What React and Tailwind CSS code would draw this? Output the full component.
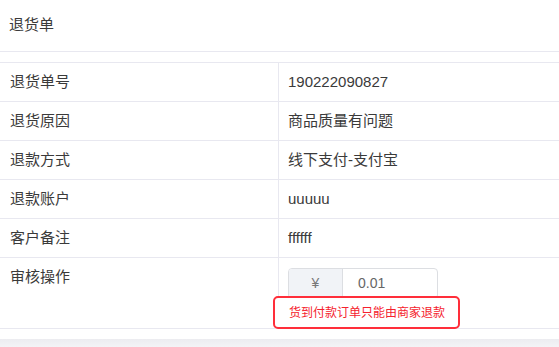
const ROWS = [
  { label: '退货单号', value: '190222090827' },
  { label: '退货原因', value: '商品质量有问题' },
  { label: '退款方式', value: '线下支付-支付宝' },
  { label: '退款账户', value: 'uuuuu' },
  { label: '客户备注', value: 'ffffff' },
];

const font = { fontFamily: '"Liberation Sans", "Noto Sans CJK SC", sans-serif' };

export default function App() {
  return (
    <div className="w-[559px] h-[347px] bg-white overflow-hidden text-[15px] text-[#3a3a3a]" style={font}>
      {/* Titel */}
      <div className="h-[52px] flex items-center pl-[9px] border-b border-[#e8e8f0]">退货单</div>

      <div className="mt-[10px] border-t border-[#e8e8f0]">
        {ROWS.map(r => (
          <div key={r.label} className="flex h-[39px] border-b border-[#e8e8f0]">
            <div className="w-[279px] shrink-0 border-r border-[#e8e8f0] flex items-center pl-[10px]">{r.label}</div>
            <div className="flex-1 flex items-center pl-[9px]">{r.value}</div>
          </div>
        ))}

        {/* Aktion */}
        <div className="flex h-[71px] border-b border-[#e8e8f0]">
          <div className="w-[279px] shrink-0 border-r border-[#e8e8f0] pl-[10px] pt-[8px] leading-[22px]">审核操作</div>
          <div className="flex-1 pl-[9px] pt-[10px] relative">
            <div className="flex w-[150px] h-[31px] border border-[#dcdee2] rounded-[4px] overflow-hidden text-[14px]">
              <div className="w-[54px] bg-[#f1f3f7] border-r border-[#dcdee2] flex items-center justify-center text-[#777]">¥</div>
              <div className="flex-1 flex items-center pl-[15px] text-[#666]">0.01</div>
            </div>
            <div className="absolute left-[-6px] top-[38px] w-[187px] h-[33px] border-2 border-[#ff2e3a] rounded-[5px] flex items-center pl-[14px] text-[12px] text-[#f5222d] bg-white">
              货到付款订单只能由商家退款
            </div>
          </div>
        </div>
      </div>

      <div className="h-[10px] bg-white" />
      <div className="h-[12px] bg-gradient-to-b from-[#ececf0] to-[#f7f7f9]" />
    </div>
  );
}
